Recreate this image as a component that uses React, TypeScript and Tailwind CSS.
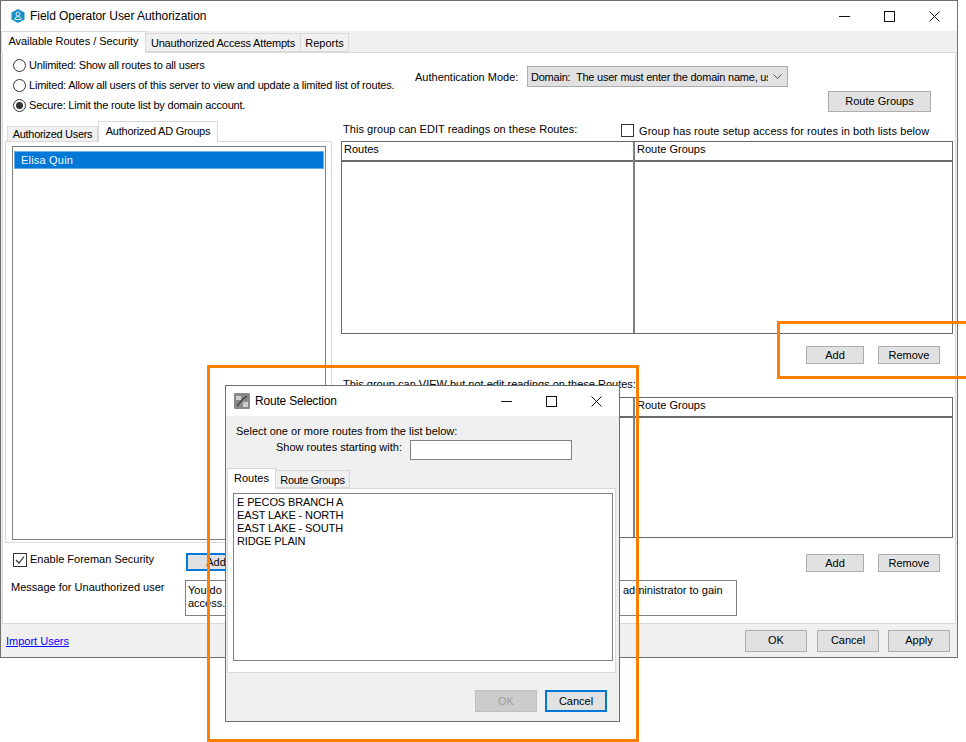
import React from "react";

const font = "font-['Liberation_Sans',Arial,sans-serif]";
const base = "flex items-center justify-center whitespace-nowrap leading-none ";

function Btn({ children, className = "" }: { children: React.ReactNode; className?: string }) {
  return <div className={base + "border border-[#adadad] bg-[#e1e1e1] text-black " + className}>{children}</div>;
}

function Radio({ checked, label }: { checked?: boolean; label: string }) {
  return (
    <div className="flex h-[20px] items-center">
      <div className="flex h-[13px] w-[13px] shrink-0 items-center justify-center rounded-full border border-[#333] bg-white">
        {checked && <div className="h-[7px] w-[7px] rounded-full bg-[#333]" />}
      </div>
      <span className="ml-[3px] whitespace-nowrap tracking-[-0.2px]">{label}</span>
    </div>
  );
}

function WinControls({ gap }: { gap: string }) {
  return (
    <div className={"flex items-center " + gap}>
      <svg width="11" height="11" viewBox="0 0 11 11"><path d="M0 5.5H11" stroke="#111" /></svg>
      <svg width="11" height="11" viewBox="0 0 11 11"><rect x="0.5" y="0.5" width="10" height="10" fill="none" stroke="#111" /></svg>
      <svg width="11" height="11" viewBox="0 0 11 11"><path d="M0.5 0.5L10.5 10.5M10.5 0.5L0.5 10.5" stroke="#111" /></svg>
    </div>
  );
}

function RouteTable({ height }: { height: string }) {
  return (
    <div className={"flex border border-[#696969] " + height}>
      <div className="flex w-[293px] shrink-0 flex-col border-r-2 border-[#808080]">
        <div className="h-[20px] border-b-2 border-[#696969] pl-[2px]">Routes</div>
      </div>
      <div className="flex flex-1 flex-col">
        <div className="h-[20px] border-b-2 border-[#696969] pl-[2px]">Route Groups</div>
      </div>
    </div>
  );
}

function AddRemove({ className }: { className: string }) {
  return (
    <div className={"flex h-[18px] justify-end gap-[14px] pr-[13px] " + className}>
      <Btn className="w-[58px]">Add</Btn>
      <Btn className="w-[62px]">Remove</Btn>
    </div>
  );
}

export default function App() {
  return (
    <div className={"relative h-[742px] w-[966px] overflow-hidden whitespace-nowrap bg-white text-[11px] leading-[14px] text-black " + font}>
      {/* main window */}
      <div className="absolute left-0 top-0 flex h-[658px] w-[958px] flex-col border border-[#6f6f6f] bg-[#f0f0f0]">
        <div className="flex h-[30px] shrink-0 items-center justify-between bg-white pl-[9px] pr-[17px]">
          <div className="flex items-center">
            <svg width="16" height="16" viewBox="0 0 16 16">
              <path d="M8 1L14.5 4.5V11.5L8 15L1.5 11.5V4.5Z" fill="#1b8fc4" />
              <circle cx="8" cy="6" r="2" fill="none" stroke="#d8eef8" strokeWidth="1" />
              <path d="M4.8 11.5C5 9 6.5 8.6 8 8.6S11 9 11.2 11.5Z" fill="none" stroke="#d8eef8" strokeWidth="1" />
            </svg>
            <span className="ml-[4px] text-[12px] tracking-[-0.05px]">Field Operator User Authorization</span>
          </div>
          <WinControls gap="gap-[34px]" />
        </div>

        {/* tabs */}
        <div className="flex h-[21px] shrink-0 items-end">
          <div className="z-10 -mb-px flex h-[22px] w-[145px] items-center justify-center border border-b-0 border-[#d9d9d9] bg-white pb-[3px] tracking-[-0.04px]">Available Routes / Security</div>
          <div className="flex h-[19px] w-[155px] items-center justify-center border border-l-0 border-[#d9d9d9] bg-[#f0f0f0] tracking-[-0.18px]">Unauthorized Access Attempts</div>
          <div className="flex h-[19px] w-[48px] items-center justify-center border border-l-0 border-[#d9d9d9] bg-[#f0f0f0]">Reports</div>
        </div>

        {/* tab content */}
        <div className="ml-[1px] mr-[1px] flex h-[572px] shrink-0 flex-col border border-[#d9d9d9] bg-white">
          <div className="flex">
            {/* left column */}
            <div className="flex w-[338px] shrink-0 flex-col">
              <div className="ml-[10px] mt-[2px] flex flex-col">
                <Radio label="Unlimited: Show all routes to all users" />
                <Radio label="Limited: Allow all users of this server to view and update a limited list of routes." />
                <Radio checked label="Secure: Limit the route list by domain account." />
              </div>
              <div className="ml-[4px] mt-[6px] flex h-[20px] items-end">
                <div className="flex h-[15px] w-[91px] items-center justify-center border border-b-0 border-[#d9d9d9] bg-[#f0f0f0] pb-[1px] tracking-[-0.3px]">Authorized Users</div>
                <div className="z-10 -mb-px flex h-[21px] w-[120px] items-center justify-center border border-b-0 border-[#d9d9d9] bg-white pb-[3px] tracking-[-0.25px]">Authorized AD Groups</div>
              </div>
              <div className="ml-[2px] mr-[9px] h-[402px] border border-[#d9d9d9] p-[4px_5px_2px_6px]">
                <div className="h-full border border-[#808080] p-[4px_1px]">
                  <div className="flex h-[18px] items-center bg-[#0078d7] pl-[7px] tracking-[0.2px] text-[#f4f9fd] outline outline-1 -outline-offset-1 outline-[#66aee7]">Elisa Quin</div>
                </div>
              </div>
              <div className="ml-[10px] mt-[10px] flex h-[18px] items-start">
                <div className="flex h-[14px] w-[14px] shrink-0 items-center justify-center border border-[#333] bg-white">
                  <svg width="12" height="12" viewBox="0 0 12 12"><path d="M2 6L5 9L10 2.5" fill="none" stroke="#333" strokeWidth="1.2" /></svg>
                </div>
                <span className="-mt-px ml-[3px] w-[156px]">Enable Foreman Security</span>
                <Btn className="h-[18px] w-[60px] !border-2 !border-[#0078d7]">Add</Btn>
              </div>
            </div>

            {/* right column */}
            <div className="flex min-w-0 flex-1 flex-col pr-[2px]">
              <div className="ml-[74px] mt-[12px] flex h-[23px] items-center">
                <span className="w-[112px]">Authentication Mode:</span>
                <div className="flex h-[21px] w-[261px] items-center justify-between overflow-hidden border border-[#adadad] bg-[#e1e1e1] pl-[3px] pr-[5px]">
                  <span className="w-[237px] overflow-hidden whitespace-nowrap tracking-[-0.22px]">Domain:&nbsp; The user must enter the domain name, user name</span>
                  <svg width="9" height="6" viewBox="0 0 9 6" className="shrink-0"><path d="M0.5 0.5L4.5 4.5L8.5 0.5" fill="none" stroke="#555" /></svg>
                </div>
              </div>
              <Btn className="ml-[487px] mt-[3px] h-[21px] w-[103px]">Route Groups</Btn>
              <div className="mb-[2px] mt-[10px] flex h-[17px] items-center pl-[2px]">
                <span className="-mt-[4px] w-[278px] tracking-[0.05px]">This group can EDIT readings on these Routes:</span>
                <div className="h-[13px] w-[13px] shrink-0 border border-[#333] bg-white" />
                <span className="ml-[5px] tracking-[0.07px]">Group has route setup access for routes in both lists below</span>
              </div>
              <RouteTable height="h-[193px]" />
              <AddRemove className="mt-[12px]" />
              <div className="mt-[13px] h-[20px] pl-[2px]">This group can VIEW but not edit readings on these Routes:</div>
              <RouteTable height="h-[141px]" />
              <AddRemove className="mt-[16px]" />
            </div>
          </div>
          <div className="mt-[8px] flex items-start pl-[8px]">
            <span className="w-[174px]">Message for Unauthorized user</span>
            <div className="h-[36px] w-[552px] border border-[#808080] bg-white px-[2px] pt-[3px] leading-[13px]">
              You do not have permission to this Field Operator program.&nbsp;&nbsp; Please contact your system administrator to gain
              <br />
              access.
            </div>
          </div>
        </div>

        {/* footer */}
        <div className="flex flex-1 items-center justify-between pl-[5px] pr-[7px]">
          <span className="text-[#0000ff] underline">Import Users</span>
          <div className="flex gap-[9px]">
            <Btn className="mr-[1px] h-[22px] w-[62px]">OK</Btn>
            <Btn className="h-[22px] w-[62px]">Cancel</Btn>
            <Btn className="h-[22px] w-[62px]">Apply</Btn>
          </div>
        </div>
      </div>

      {/* dialog */}
      <div className="absolute left-[225px] top-[385px] flex h-[337px] w-[395px] flex-col border border-[#6f6f6f] bg-[#f0f0f0]">
        <div className="flex h-[30px] shrink-0 items-center justify-between bg-white pl-[8px] pr-[17px]">
          <div className="flex items-center">
            <svg width="16" height="16" viewBox="0 0 16 16">
              <rect width="16" height="16" rx="1" fill="#8a8a8a" />
              <path d="M2 3H7V7H2ZM9 9H14V14H9Z" fill="#cfcfcf" />
              <path d="M3 13L8 7L13 3" fill="none" stroke="#3c3c3c" strokeWidth="1.2" />
            </svg>
            <span className="ml-[5px] text-[12px] tracking-[-0.2px]">Route Selection</span>
          </div>
          <WinControls gap="gap-[34px]" />
        </div>
        <div className="pl-[10px] pt-[8px]">Select one or more routes from the list below:</div>
        <div className="ml-[50px] mt-[2px] flex h-[20px] items-start">
          <span className="w-[134px]">Show routes starting with:</span>
          <div className="h-[20px] w-[162px] border border-[#808080] bg-white" />
        </div>
        <div className="ml-[1px] mt-[8px] flex h-[20px] items-end">
          <div className="z-10 -mb-px flex h-[21px] w-[49px] items-center justify-center border border-b-0 border-[#d9d9d9] bg-white pb-[3px]">Routes</div>
          <div className="flex h-[18px] w-[74px] items-center justify-center border border-l-0 border-[#d9d9d9] bg-[#f0f0f0] pt-[1px] tracking-[-0.35px]">Route Groups</div>
        </div>
        <div className="ml-[1px] mr-[3px] h-[185px] shrink-0 border border-[#d9d9d9] bg-white p-[4px_2px_11px_5px]">
          <div className="h-full border border-[#808080] pl-[3px] pt-[2px] leading-[13px] tracking-[-0.12px]">
            <div>E PECOS BRANCH A</div>
            <div>EAST LAKE - NORTH</div>
            <div>EAST LAKE - SOUTH</div>
            <div>RIDGE PLAIN</div>
          </div>
        </div>
        <div className="flex flex-1 items-start justify-end gap-[8px] pr-[12px] pt-[17px]">
          <div className={base + "h-[22px] w-[62px] border border-[#bfbfbf] bg-[#cccccc] text-[#a0a0a0]"}>OK</div>
          <Btn className="h-[22px] w-[62px] !border-2 !border-[#0078d7]">Cancel</Btn>
        </div>
      </div>

      {/* highlight rectangles */}
      <div className="absolute left-[207px] top-[365px] h-[377px] w-[432px] border-[3px] border-[#ff8000]" />
      <div className="absolute left-[777px] top-[321px] h-[58px] w-[189px] border-[3px] border-r-0 border-[#ff8000]" />
    </div>
  );
}
